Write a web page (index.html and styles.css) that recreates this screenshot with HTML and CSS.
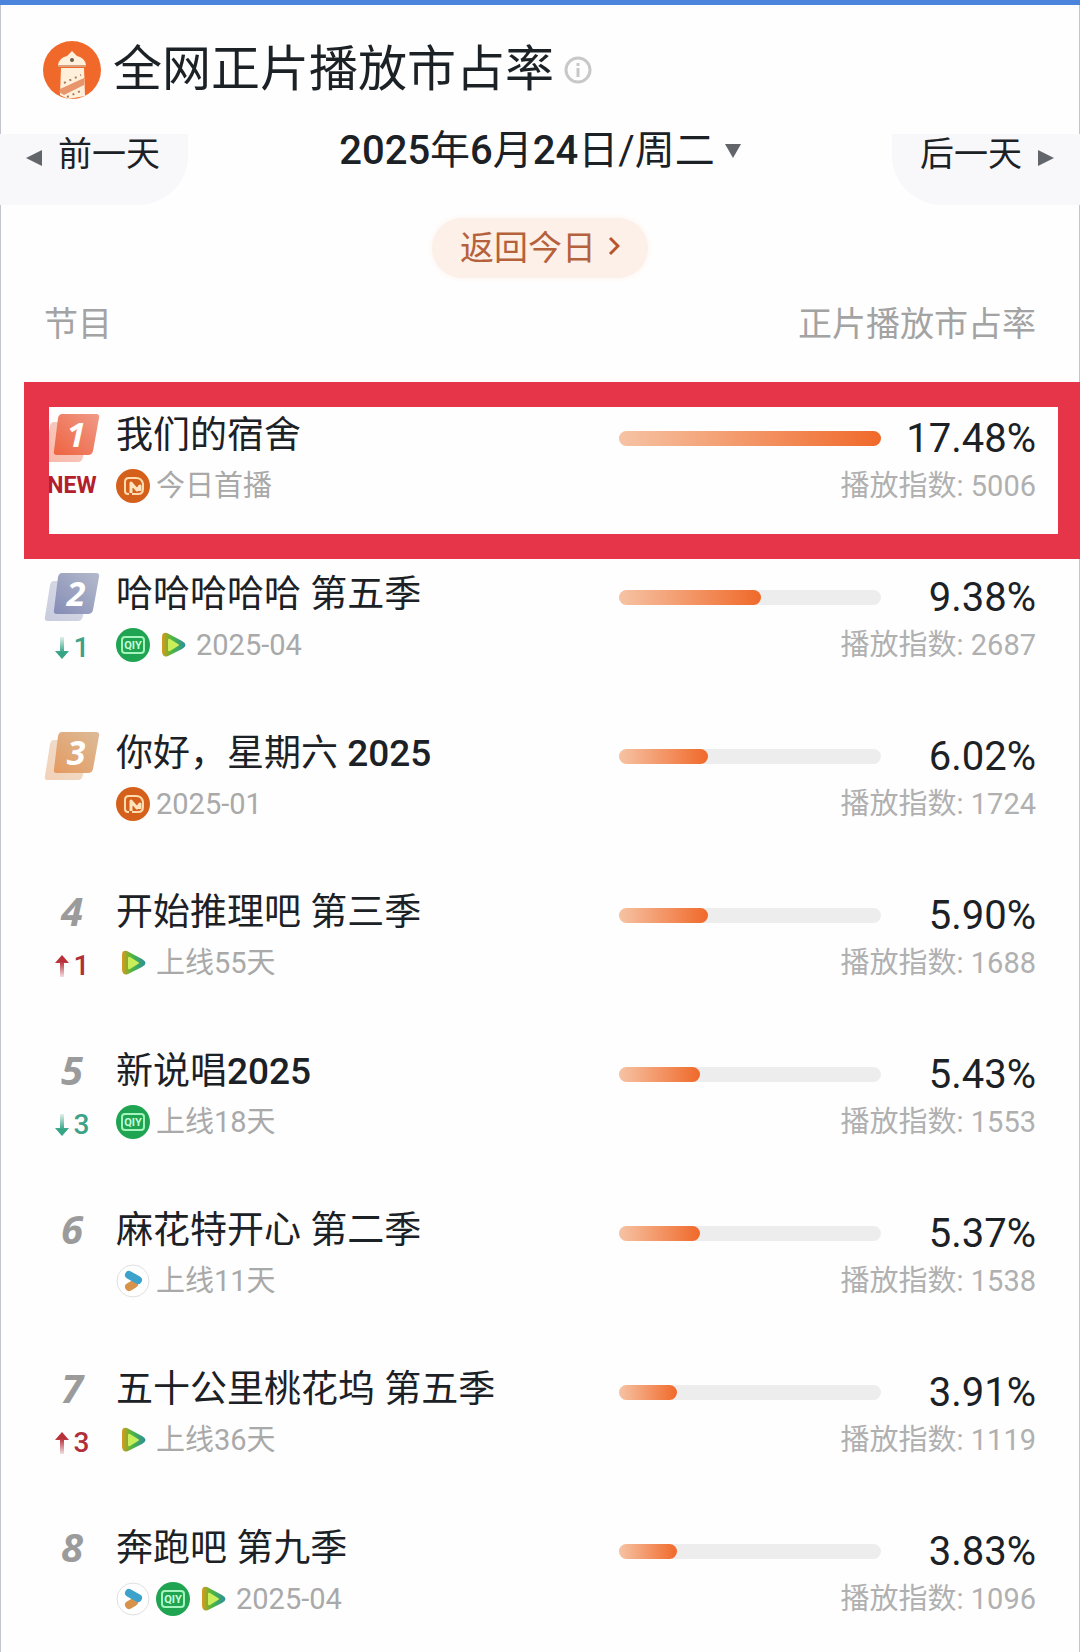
FILE: index.html
```html
<!DOCTYPE html>
<html lang="zh-CN">
<head>
  <meta charset="UTF-8">
  <meta name="viewport" content="width=device-width, initial-scale=1.0">
  <title>全网正片播放市占率</title>
  <link rel="stylesheet" href="styles.css">
</head>
<body>
  <!-- shared icons -->
  <svg class="sprite" width="0" height="0" aria-hidden="true">
    <defs>
      <linearGradient id="play-edge" x1="0" x2="1">
        <stop offset="0" stop-color="#d99a1c"/>
        <stop offset="0.4" stop-color="#4fb83c"/>
        <stop offset="1" stop-color="#2b8f9c"/>
      </linearGradient>
      <linearGradient id="up-fade" x1="0" y1="0" x2="0" y2="1">
        <stop offset="0.3" stop-color="#b8303a"/>
        <stop offset="1" stop-color="#b8303a" stop-opacity="0.15"/>
      </linearGradient>
      <linearGradient id="down-fade" x1="0" y1="1" x2="0" y2="0">
        <stop offset="0.3" stop-color="#35a585"/>
        <stop offset="1" stop-color="#35a585" stop-opacity="0.15"/>
      </linearGradient>
      <linearGradient id="gold" x1="0" y1="1" x2="1" y2="0">
        <stop offset="0" stop-color="#e59a60"/>
        <stop offset="1" stop-color="#dcbb98"/>
      </linearGradient>
      <linearGradient id="silver" x1="0" y1="1" x2="1" y2="0">
        <stop offset="0" stop-color="#848cb6"/>
        <stop offset="1" stop-color="#b4bacb"/>
      </linearGradient>
      <linearGradient id="red" x1="0" y1="1" x2="1" y2="0">
        <stop offset="0" stop-color="#ee6340"/>
        <stop offset="1" stop-color="#f09a88"/>
      </linearGradient>
    </defs>
    <symbol id="mango" viewBox="0 0 34 34">
      <circle cx="17" cy="17" r="17" fill="#d5601c"/>
      <path d="M13 25h-1q-3 0-3-3v-9q0-4 4-4h7q6 0 7 6v5q0 5-5 5h-6" fill="none" stroke="#ffdcae" stroke-width="2"/>
      <path d="M15 24V14l6 7 3-4v5" fill="none" stroke="#ffe3bd" stroke-width="3" stroke-linejoin="round"/>
    </symbol>
    <symbol id="iqiyi" viewBox="0 0 34 34">
      <circle cx="17" cy="17" r="17" fill="#1fa552"/>
      <rect x="6" y="9" width="22" height="16" rx="3" fill="none" stroke="#a5f3bd" stroke-width="2"/>
      <text x="17" y="21" text-anchor="middle" class="iqiyi-text">QIY</text>
    </symbol>
    <symbol id="tencent" viewBox="0 0 34 34">
      <path d="M6 9q0-5 5-4l15 8q7 4 0 8l-14 7q-5 2-6-4z" fill="url(#play-edge)"/>
      <path d="M12 12q0-2 2-1l8 5q2 1 0 2l-8 5q-2 1-2-1z" fill="#c8ef5a"/>
    </symbol>
    <symbol id="youku" viewBox="0 0 34 34">
      <circle cx="17" cy="17" r="16" fill="#fff" stroke="#e0e0e0"/>
      <path d="M13 23l5-3" stroke="#d8934a" stroke-width="8" stroke-linecap="round"/>
      <path d="M13 11l9 5" stroke="#3ba3cb" stroke-width="8" stroke-linecap="round"/>
    </symbol>
    <symbol id="up" viewBox="0 0 14 22">
      <path d="M7 0l7 8H9v14H5V8H0z" fill="url(#up-fade)"/>
    </symbol>
    <symbol id="down" viewBox="0 0 14 22">
      <path d="M7 22l7-8H9V0H5v14H0z" fill="url(#down-fade)"/>
    </symbol>
    <symbol id="card" viewBox="0 0 56 50">
      <path d="M10 9h32q4 0 3 4l-6 31q-1 5-5 5H4q-4 0-3-4L6 13q1-4 4-4z" opacity="0.45"/>
      <path d="M18 1h34q4 0 3 4l-6 33q-1 4-5 4H13q-4 0-3-4l4-33q1-4 4-4z"/>
    </symbol>
  </svg>

  <header class="page-title">
    <svg class="logo" viewBox="0 0 58 58" aria-hidden="true">
      <circle cx="29" cy="29" r="29" fill="#f0692a"/>
      <path d="M29 10l5 5q8 2 9 9H15q1-7 9-9z" fill="#fff0dc"/>
      <circle cx="29" cy="19" r="2" fill="#6a5a4c"/>
      <path d="M15 25h28" stroke="#dca07c" stroke-width="2"/>
      <path d="M18 27h23l1 28-17 3-8-4z" fill="#fff0dc"/>
      <path d="M17 48l24-11v7L21 54l-5-3z" fill="#e8956c"/>
      <path d="M21 42l17-8M24 56l16-7" stroke="#a97a5c" stroke-width="2" stroke-dasharray="2 4"/>
    </svg>
    <h1>全网正片播放市占率</h1>
    <button class="info" type="button" aria-label="说明">
      <svg viewBox="0 0 28 28" width="28" height="28">
        <circle cx="14" cy="14" r="12" fill="none" stroke="#c8c8c8" stroke-width="3"/>
        <path d="M14 12v9M14 7v3" stroke="#c8c8c8" stroke-width="3"/>
      </svg>
    </button>
  </header>

  <nav class="day-nav">
    <button class="day prev" type="button">
      <svg viewBox="0 0 16 18" width="16" height="18"><path d="M16 1v16L0 9z"/></svg>
      前一天
    </button>
    <button class="date" type="button" aria-haspopup="dialog">
      <span><b>2025</b>年<b>6</b>月<b>24</b>日/周二</span>
      <svg viewBox="0 0 16 16" width="16" height="16"><path d="M0 1h16L8 15z"/></svg>
    </button>
    <button class="day next" type="button">
      后一天
      <svg viewBox="0 0 16 18" width="16" height="18"><path d="M0 1v16l16-8z"/></svg>
    </button>
  </nav>

  <button class="today" type="button">
    返回今日
    <svg viewBox="0 0 12 20" width="12" height="20"><path d="M2 2l8 8-8 8" fill="none" stroke="#b9552d" stroke-width="3"/></svg>
  </button>

  <table class="ranking">
    <colgroup>
      <col class="col-rank">
      <col>
      <col class="col-share">
    </colgroup>
    <thead>
      <tr>
        <th colspan="2">节目</th>
        <th>正片播放市占率</th>
      </tr>
    </thead>
    <tbody>
      <tr class="marked">
        <td class="rank">
          <svg class="badge" viewBox="0 0 56 50"><use href="#card" fill="url(#red)"/><text x="32" y="34">1</text></svg>
          <div class="change new">NEW</div>
        </td>
        <td>
          <div class="name">我们的宿舍</div>
          <div class="meta"><svg><use href="#mango"/></svg>今日首播</div>
        </td>
        <td>
          <div class="share"><div class="bar"><div class="fill" style="width: 100%"></div></div><span class="value">17.48%</span></div>
          <div class="index">播放指数: 5006</div>
        </td>
      </tr>
      <tr>
        <td class="rank">
          <svg class="badge" viewBox="0 0 56 50"><use href="#card" fill="url(#silver)"/><text x="32" y="34">2</text></svg>
          <div class="change down"><svg><use href="#down"/></svg>1</div>
        </td>
        <td>
          <div class="name">哈哈哈哈哈 第五季</div>
          <div class="meta"><svg><use href="#iqiyi"/></svg><svg><use href="#tencent"/></svg>2025-04</div>
        </td>
        <td>
          <div class="share"><div class="bar"><div class="fill" style="width: 54%"></div></div><span class="value">9.38%</span></div>
          <div class="index">播放指数: 2687</div>
        </td>
      </tr>
      <tr>
        <td class="rank">
          <svg class="badge" viewBox="0 0 56 50"><use href="#card" fill="url(#gold)"/><text x="32" y="34">3</text></svg>
        </td>
        <td>
          <div class="name">你好，星期六 <b>2025</b></div>
          <div class="meta"><svg><use href="#mango"/></svg>2025-01</div>
        </td>
        <td>
          <div class="share"><div class="bar"><div class="fill" style="width: 34%"></div></div><span class="value">6.02%</span></div>
          <div class="index">播放指数: 1724</div>
        </td>
      </tr>
      <tr>
        <td class="rank">
          <div class="number">4</div>
          <div class="change up"><svg><use href="#up"/></svg>1</div>
        </td>
        <td>
          <div class="name">开始推理吧 第三季</div>
          <div class="meta"><svg><use href="#tencent"/></svg>上线55天</div>
        </td>
        <td>
          <div class="share"><div class="bar"><div class="fill" style="width: 34%"></div></div><span class="value">5.90%</span></div>
          <div class="index">播放指数: 1688</div>
        </td>
      </tr>
      <tr>
        <td class="rank">
          <div class="number">5</div>
          <div class="change down"><svg><use href="#down"/></svg>3</div>
        </td>
        <td>
          <div class="name">新说唱<b>2025</b></div>
          <div class="meta"><svg><use href="#iqiyi"/></svg>上线18天</div>
        </td>
        <td>
          <div class="share"><div class="bar"><div class="fill" style="width: 31%"></div></div><span class="value">5.43%</span></div>
          <div class="index">播放指数: 1553</div>
        </td>
      </tr>
      <tr>
        <td class="rank">
          <div class="number">6</div>
        </td>
        <td>
          <div class="name">麻花特开心 第二季</div>
          <div class="meta"><svg><use href="#youku"/></svg>上线11天</div>
        </td>
        <td>
          <div class="share"><div class="bar"><div class="fill" style="width: 31%"></div></div><span class="value">5.37%</span></div>
          <div class="index">播放指数: 1538</div>
        </td>
      </tr>
      <tr>
        <td class="rank">
          <div class="number">7</div>
          <div class="change up"><svg><use href="#up"/></svg>3</div>
        </td>
        <td>
          <div class="name">五十公里桃花坞 第五季</div>
          <div class="meta"><svg><use href="#tencent"/></svg>上线36天</div>
        </td>
        <td>
          <div class="share"><div class="bar"><div class="fill" style="width: 22%"></div></div><span class="value">3.91%</span></div>
          <div class="index">播放指数: 1119</div>
        </td>
      </tr>
      <tr>
        <td class="rank">
          <div class="number">8</div>
        </td>
        <td>
          <div class="name">奔跑吧 第九季</div>
          <div class="meta"><svg><use href="#youku"/></svg><svg><use href="#iqiyi"/></svg><svg><use href="#tencent"/></svg>2025-04</div>
        </td>
        <td>
          <div class="share"><div class="bar"><div class="fill" style="width: 22%"></div></div><span class="value">3.83%</span></div>
          <div class="index">播放指数: 1096</div>
        </td>
      </tr>
    </tbody>
  </table>
</body>
</html>
```
FILE: styles.css
```css
* {
  box-sizing: border-box;
}
body {
  margin: 0;
  min-height: 100vh;
  border-top: 5px solid #4a84dc;
  background-color: #fefefe;
  box-shadow: inset 1px 0 #c3c5cc, inset -1px 0 #c3c5cc;
  font-family: Roboto, "Noto Sans CJK SC", sans-serif;
  color: #1c2126;
}
button {
  border: none;
  background: none;
  padding: 0;
  font-family: inherit;
  color: inherit;
  cursor: pointer;
}
b {
  font-weight: 500;
}
.sprite {
  position: absolute;
}

/* title */
.page-title {
  display: flex;
  align-items: center;
  padding: 36px 43px 0;
}
.logo {
  width: 58px;
  height: 58px;
  margin-right: 12px;
}
h1 {
  margin: 0 10px 0 0;
  font-size: 49px;
  font-weight: 400;
  line-height: 58px;
}
.info {
  display: flex;
}

/* day switcher */
.day-nav {
  display: flex;
  justify-content: space-between;
  align-items: flex-start;
  margin-top: 35px;
}
.day-nav svg {
  fill: #62666b;
}
.day {
  display: flex;
  align-items: center;
  gap: 16px;
  width: 188px;
  padding: 0 26px 31px;
  font-size: 34px;
  line-height: 40px;
  background-color: #f8f8fb;
}
.day svg {
  margin-top: 8px;
}
.prev {
  border-radius: 0 0 50px 0;
}
.next {
  justify-content: flex-end;
  border-radius: 0 0 0 50px;
}
.date {
  display: flex;
  align-items: center;
  gap: 10px;
  font-size: 40px;
  line-height: 34px;
}
.today {
  display: flex;
  align-items: center;
  gap: 12px;
  height: 60px;
  margin: 13px auto 0;
  padding: 0 28px 5px;
  border-radius: 30px;
  background-color: #fdf0e9;
  box-shadow: 0 0 6px #fdf3ec;
  font-size: 34px;
  color: #b5623c;
}

/* ranking table */
.ranking {
  width: calc(100% - 88px);
  margin: 0 44px;
  border-collapse: collapse;
  table-layout: fixed;
}
.col-rank {
  width: 72px;
}
.col-share {
  width: 42%;
}
th {
  padding: 22px 0 61px;
  font-size: 34px;
  font-weight: 400;
  line-height: 48px;
  text-align: left;
  color: #a3a3a3;
}
th:last-child {
  text-align: right;
}
tbody tr {
  height: 159px;
}
tbody tr:last-child {
  height: auto;
}
td {
  padding: 0;
  vertical-align: top;
}
td.rank {
  padding-right: 16px;
}
.number {
  height: 54px;
  font-family: "Open Sans", sans-serif;
  font-size: 40px;
  font-style: italic;
  font-weight: 700;
  line-height: 50px;
  text-align: center;
  color: #9b9b9b;
}
.badge {
  display: block;
  width: 56px;
  height: 54px;
  padding-top: 4px;
}
.badge text {
  fill: #fff;
  font-family: "Open Sans", sans-serif;
  font-size: 34px;
  font-style: italic;
  font-weight: 700;
  text-anchor: middle;
}
.change {
  display: flex;
  align-items: center;
  justify-content: center;
  gap: 5px;
  font-size: 28px;
  font-weight: 500;
  line-height: 52px;
}
.change svg {
  width: 14px;
  height: 22px;
}
.change.up {
  color: #b02f38;
}
.change.down {
  color: #3da287;
}
.change.new {
  font-size: 23px;
  font-weight: 700;
  line-height: 46px;
  color: #b3202b;
}
.name {
  font-size: 37px;
  line-height: 54px;
  white-space: nowrap;
}
.meta {
  display: flex;
  align-items: center;
  gap: 6px;
  font-size: 29px;
  line-height: 46px;
  white-space: nowrap;
  color: #a9a9a9;
}
.meta svg {
  width: 34px;
  height: 34px;
}
.iqiyi-text {
  fill: #c9ffd8;
  font-family: Roboto, sans-serif;
  font-size: 11px;
  font-weight: 700;
}
.share {
  display: flex;
  align-items: center;
  height: 58px;
}
.bar {
  flex: 1;
  height: 15px;
  border-radius: 8px;
  background-color: #ededee;
}
.fill {
  height: 100%;
  border-radius: 8px;
  background: linear-gradient(to right, #f6c3a4, #f0692a);
}
.value {
  width: 155px;
  font-size: 40px;
  text-align: right;
}
.index {
  font-size: 29px;
  line-height: 38px;
  text-align: right;
  color: #b0b0b0;
}

/* red frame round the highlighted row */
.marked {
  position: relative;
}
.marked td:last-child::after {
  content: "";
  position: absolute;
  top: -27px;
  right: -44px;
  bottom: 9px;
  left: -20px;
  border: 25px solid #e63448;
  border-right-width: 22px;
  pointer-events: none;
}
```
